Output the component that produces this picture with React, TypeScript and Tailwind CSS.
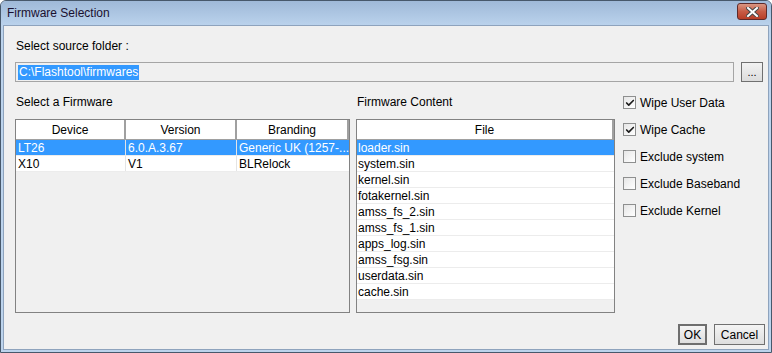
import { Check } from "lucide-react";

const firmwares = [
  { device: "LT26", version: "6.0.A.3.67", branding: "Generic UK (1257-..." },
  { device: "X10", version: "V1", branding: "BLRelock" },
];

const files = [
  "loader.sin",
  "system.sin",
  "kernel.sin",
  "fotakernel.sin",
  "amss_fs_2.sin",
  "amss_fs_1.sin",
  "apps_log.sin",
  "amss_fsg.sin",
  "userdata.sin",
  "cache.sin",
];

const options = [
  { label: "Wipe User Data", checked: true },
  { label: "Wipe Cache", checked: true },
  { label: "Exclude system", checked: false },
  { label: "Exclude Baseband", checked: false },
  { label: "Exclude Kernel", checked: false },
];

function CheckBox({ label, checked }: { label: string; checked: boolean }) {
  return (
    <div className="flex items-center h-[27px]">
      <span className="w-[13px] h-[13px] border border-[#8e8f8f] bg-gradient-to-br from-[#e6e6e6] to-white flex items-center justify-center">
        {checked && <Check className="w-[10px] h-[10px] text-[#1c1c1c]" strokeWidth={4} />}
      </span>
      <span className="ml-[4px] text-[12px] text-black">{label}</span>
    </div>
  );
}

export default function App() {
  return (
    <div
      className="w-[772px] h-[353px] bg-[#bcd3ec] border border-[#47586b] rounded-t-[6px] flex flex-col overflow-hidden"
      style={{ fontFamily: '"Liberation Sans", Arial, sans-serif' }}
    >
      <div className="h-[24px] shrink-0 bg-gradient-to-b from-[#9fb9d8] to-[#bad2ec] flex items-center justify-between pl-[6px] pr-[4px]">
        <span className="text-[12px] text-[#1a1030]">Firmware Selection</span>
        <div className="w-[30px] h-[17px] -mt-[3px] rounded-[3px] border border-[#5e2a2a] bg-gradient-to-b from-[#d99683] via-[#c75b45] to-[#b83d26] flex items-center justify-center">
          <svg width="13" height="10" viewBox="0 0 13 10">
            <path d="M2 1 L11 9 M11 1 L2 9" stroke="#4a4a4a" strokeWidth="4" strokeLinecap="square" />
            <path d="M2 1 L11 9 M11 1 L2 9" stroke="#ffffff" strokeWidth="2" strokeLinecap="square" />
          </svg>
        </div>
      </div>

      <div className="flex-1 mx-[2px] mb-[2px] bg-[#f0f0f0] border border-[#8ea3bd] flex flex-col pl-[11px] pr-[3px]">
        <div className="mt-[12px] h-[16px] pl-[1px] text-[12px] leading-[16px] text-black">Select source folder :</div>
        <div className="mt-[8px] flex gap-[7px]">
          <div className="w-[719px] h-[20px] border border-[#a5a5a5] bg-[#f0f0f0] flex items-center pl-[2px]">
            <span className="bg-[#3399ff] text-white text-[12px] leading-[15px] px-[1px]">C:\Flashtool\firmwares</span>
          </div>
          <button className="w-[22px] h-[20px] border border-[#707070] bg-gradient-to-b from-[#f2f2f2] to-[#dcdcdc] text-[11px] leading-none text-black">
            ...
          </button>
        </div>

        <div className="mt-[12px] flex">
          <div className="w-[335px] flex flex-col">
            <div className="h-[16px] pl-[1px] text-[12px] leading-[16px] text-black">Select a Firmware</div>
            <div className="mt-[9px] h-[194px] border border-[#828282] bg-[#f0f0f0] flex flex-col">
              <div className="flex h-[20px] bg-white border-b border-[#a0a0a0] text-[12px] text-black">
                <div className="w-[110px] border-r-2 border-[#a0a0a0] flex items-center justify-center">Device</div>
                <div className="w-[111px] border-r-2 border-[#a0a0a0] flex items-center justify-center">Version</div>
                <div className="flex-1 border-r-2 border-[#a0a0a0] flex items-center justify-center">Branding</div>
              </div>
              {firmwares.map((f, i) => (
                <div
                  key={f.device}
                  className={`flex h-[16px] text-[12px] leading-[16px] border-b border-[#ececec] ${
                    i === 0 ? "bg-[#3399ff] text-white" : "bg-white text-black"
                  }`}
                >
                  <div className="w-[110px] pl-[2px] border-r border-[#e4e4e4]">{f.device}</div>
                  <div className="w-[111px] pl-[2px] border-r border-[#e4e4e4]">{f.version}</div>
                  <div className="flex-1 pl-[2px] whitespace-nowrap overflow-hidden">{f.branding}</div>
                </div>
              ))}
            </div>
          </div>

          <div className="ml-[6px] w-[259px] flex flex-col">
            <div className="h-[16px] pl-[1px] text-[12px] leading-[16px] text-black">Firmware Content</div>
            <div className="mt-[9px] h-[194px] border border-[#828282] bg-[#f0f0f0] flex flex-col">
              <div className="flex h-[20px] bg-white border-b border-[#a0a0a0] text-[12px] text-black">
                <div className="flex-1 border-r-2 border-[#a0a0a0] flex items-center justify-center">File</div>
              </div>
              {files.map((name, i) => (
                <div
                  key={name}
                  className={`h-[16px] pl-[1px] text-[12px] leading-[16px] border-b border-[#ececec] ${
                    i === 0 ? "bg-[#3399ff] text-white" : "bg-white text-black"
                  }`}
                >
                  {name}
                </div>
              ))}
            </div>
          </div>

          <div className="ml-[8px] -mt-[5px] flex flex-col">
            {options.map((o) => (
              <CheckBox key={o.label} label={o.label} checked={o.checked} />
            ))}
          </div>
        </div>

        <div className="mt-[11px] flex justify-end gap-[7px]">
          <button className="w-[29px] h-[21px] border-2 border-[#6e6e6e] bg-gradient-to-b from-[#f4f4f4] to-[#dedede] text-[12px] text-black leading-none">
            OK
          </button>
          <button className="w-[51px] h-[21px] border border-[#707070] bg-gradient-to-b from-[#f4f4f4] to-[#dedede] text-[12px] text-black leading-none">
            Cancel
          </button>
        </div>
      </div>
    </div>
  );
}
